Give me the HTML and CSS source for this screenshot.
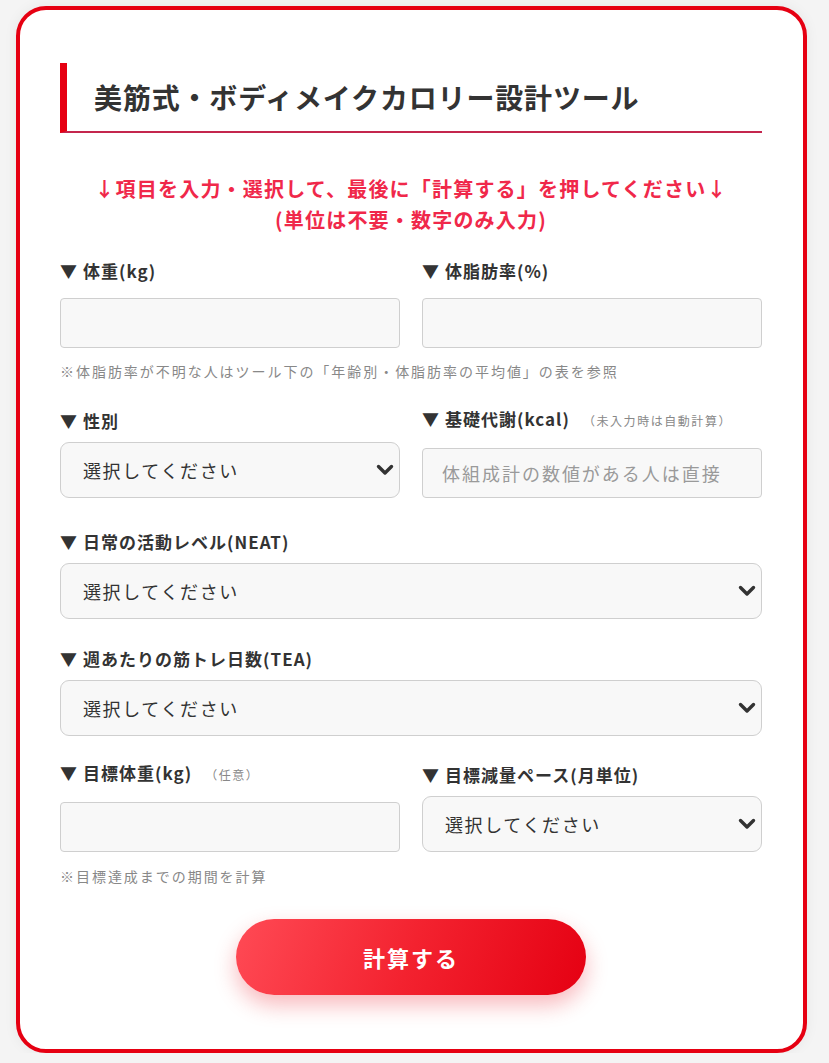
FILE: index.html
```html
<!DOCTYPE html>
<html lang="ja">
<head>
<meta charset="utf-8">
<title>美筋式・ボディメイクカロリー設計ツール</title>
<link rel="stylesheet" href="styles.css">
</head>
<body>
<div class="card">
  <h2 class="title">美筋式・ボディメイクカロリー設計ツール</h2>
  <p class="lead">↓項目を入力・選択して、最後に「計算する」を押してください↓<br>(単位は不要・数字のみ入力)</p>

  <div class="row">
    <div class="field">
      <label class="label">▼ 体重(kg)</label>
      <input class="input" type="text">
    </div>
    <div class="field">
      <label class="label">▼ 体脂肪率(%)</label>
      <input class="input" type="text">
    </div>
  </div>
  <p class="note">※体脂肪率が不明な人はツール下の「年齢別・体脂肪率の平均値」の表を参照</p>

  <div class="row row-gap">
    <div class="field">
      <label class="label">▼ 性別</label>
      <div class="select-wrap">
        <select class="select"><option>選択してください</option></select>
        <svg class="chev" width="18" height="12" viewBox="0 0 18 12"><polyline points="2.5,2.5 9,9 15.5,2.5" fill="none" stroke="#333" stroke-width="3.4" stroke-linecap="round" stroke-linejoin="round"/></svg>
      </div>
    </div>
    <div class="field">
      <label class="label">▼ 基礎代謝(kcal)<span class="sub">（未入力時は自動計算）</span></label>
      <input class="input" type="text" placeholder="体組成計の数値がある人は直接">
    </div>
  </div>

  <div class="row row-full row-gap2">
    <div class="field">
      <label class="label">▼ 日常の活動レベル(NEAT)</label>
      <div class="select-wrap">
        <select class="select"><option>選択してください</option></select>
        <svg class="chev" width="18" height="12" viewBox="0 0 18 12"><polyline points="2.5,2.5 9,9 15.5,2.5" fill="none" stroke="#333" stroke-width="3.4" stroke-linecap="round" stroke-linejoin="round"/></svg>
      </div>
    </div>
  </div>

  <div class="row row-full row-gap3">
    <div class="field">
      <label class="label">▼ 週あたりの筋トレ日数(TEA)</label>
      <div class="select-wrap">
        <select class="select"><option>選択してください</option></select>
        <svg class="chev" width="18" height="12" viewBox="0 0 18 12"><polyline points="2.5,2.5 9,9 15.5,2.5" fill="none" stroke="#333" stroke-width="3.4" stroke-linecap="round" stroke-linejoin="round"/></svg>
      </div>
    </div>
  </div>

  <div class="row row-gap4">
    <div class="field">
      <label class="label">▼ 目標体重(kg)<span class="sub">（任意）</span></label>
      <input class="input" type="text">
    </div>
    <div class="field">
      <label class="label">▼ 目標減量ペース(月単位)</label>
      <div class="select-wrap">
        <select class="select"><option>選択してください</option></select>
        <svg class="chev" width="18" height="12" viewBox="0 0 18 12"><polyline points="2.5,2.5 9,9 15.5,2.5" fill="none" stroke="#333" stroke-width="3.4" stroke-linecap="round" stroke-linejoin="round"/></svg>
      </div>
    </div>
  </div>
  <p class="note note-last">※目標達成までの期間を計算</p>

  <button class="btn" type="button">計算する</button>
</div>
</body>
</html>
```

FILE: styles.css
```css
* { box-sizing: border-box; }

html, body {
  margin: 0;
  padding: 0;
}

body {
  background: #f4f4f4;
  font-family: "Noto Sans CJK JP", "Noto Sans", sans-serif;
  color: #333;
  padding: 6px 0 0 16px;
}

.card {
  width: 791px;
  background: #fff;
  border: 4px solid #e60012;
  border-radius: 30px;
  padding: 53px 41px 54px 40px;
  box-shadow: 0 0 14px rgba(0, 0, 0, 0.06);
}

.title {
  margin: 0;
  height: 70px;
  line-height: 68px;
  border-left: 7px solid #e60012;
  border-bottom: 2px solid #c4264e;
  padding-left: 27px;
  font-size: 28px;
  font-weight: 700;
  letter-spacing: 0.03em;
  color: #333;
}

.lead {
  margin: 40px 0 0;
  text-align: center;
  color: #f0284a;
  font-weight: 700;
  font-size: 20px;
  line-height: 31px;
  letter-spacing: 0.06em;
}

.row {
  display: grid;
  grid-template-columns: 1fr 1fr;
  column-gap: 22px;
  align-items: end;
  margin-top: 23px;
}

.row-full { grid-template-columns: 1fr; }

.row-gap { margin-top: 25px; }
.row-gap2 { margin-top: 31px; }
.row-gap3 { margin-top: 27px; }
.row-gap4 { margin-top: 24px; }

.field {
  display: flex;
  flex-direction: column;
}

.label {
  display: block;
  font-size: 17px;
  font-weight: 700;
  line-height: 26px;
  margin-bottom: 8px;
  letter-spacing: 0.06em;
  color: #333;
}

.sub {
  font-size: 12px;
  font-weight: 400;
  color: #888;
  margin-left: 13px;
  letter-spacing: 0.13em;
}

.input {
  height: 50px;
  margin: 6px 0 0;
  width: 100%;
  border: 1px solid #cfcfcf;
  border-radius: 4px;
  background: #f8f8f8;
  padding: 0 19px;
  font-family: inherit;
  font-size: 18px;
  letter-spacing: 0.11em;
  color: #333;
  outline: none;
}

.input::placeholder { color: #9a9a9a; }

.select-wrap {
  position: relative;
}

.select {
  appearance: none;
  -webkit-appearance: none;
  display: block;
  width: 100%;
  height: 56px;
  margin: 0;
  border: 1px solid #cfcfcf;
  border-radius: 9px;
  background: #f8f8f8;
  padding: 0 40px 0 22px;
  font-family: inherit;
  font-size: 18px;
  letter-spacing: 0.09em;
  color: #333;
  outline: none;
}

.chev {
  position: absolute;
  right: 6px;
  top: 22px;
  pointer-events: none;
}

.note {
  margin: 13px 0 0;
  font-size: 14px;
  line-height: 20px;
  color: #888;
  letter-spacing: 0.14em;
}

.note-last { margin-top: 14px; }

.btn {
  display: block;
  width: 350px;
  height: 76px;
  margin: 33px auto 0;
  border: none;
  border-radius: 38px;
  background: linear-gradient(110deg, #ff4a55 0%, #f3222f 50%, #e50012 100%);
  color: #fff;
  font-family: inherit;
  font-size: 22px;
  font-weight: 700;
  letter-spacing: 0.09em;
  box-shadow: 0 10px 22px rgba(230, 0, 18, 0.28);
}
```
